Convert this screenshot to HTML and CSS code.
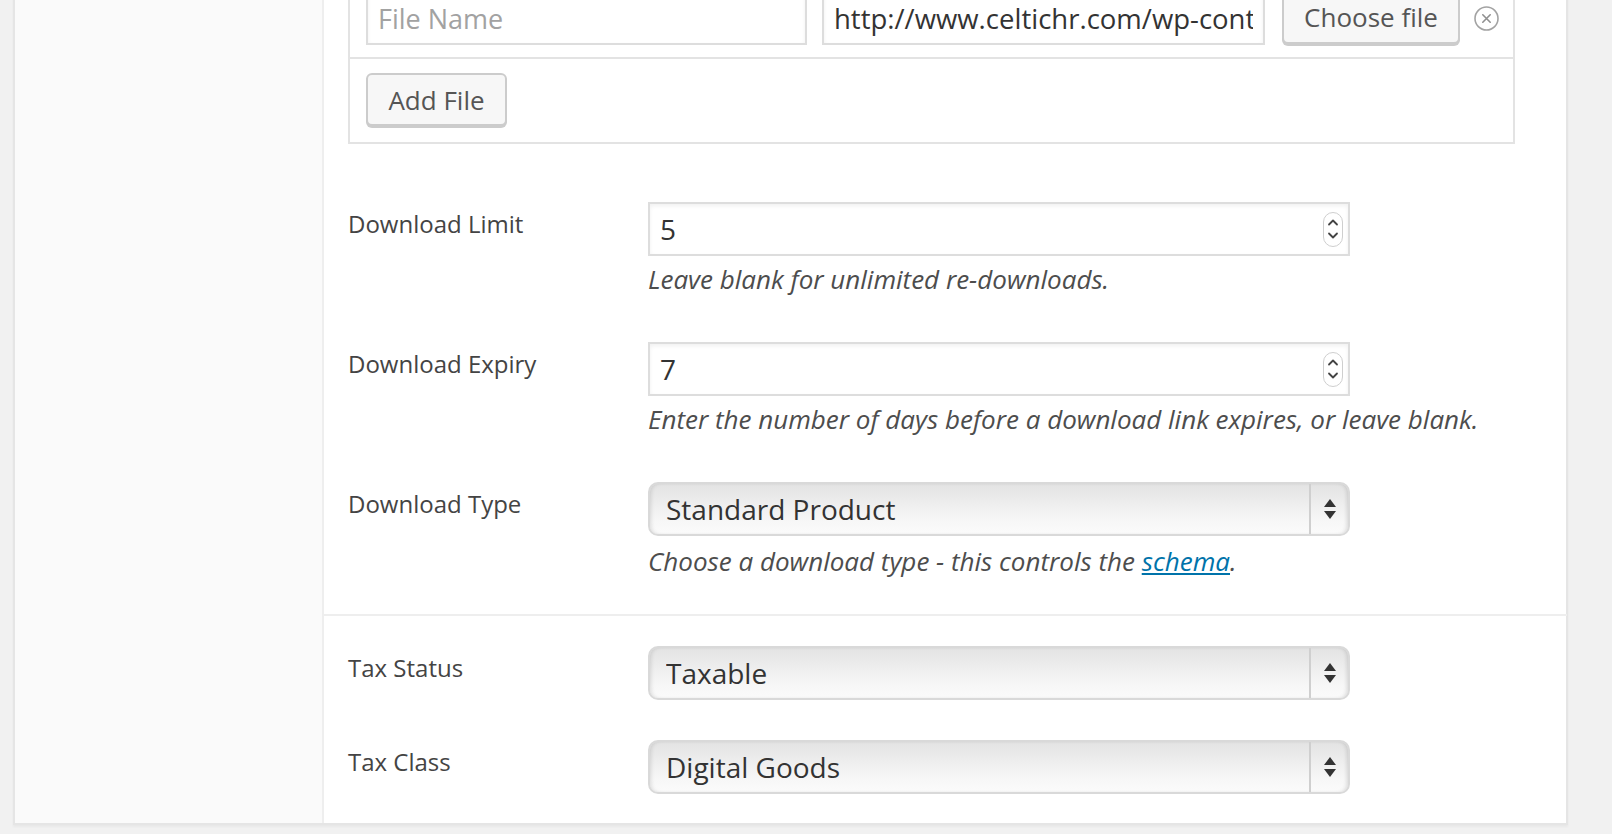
FILE: index.html
```html
<!DOCTYPE html>
<html lang="en">
<head>
<meta charset="utf-8">
<title>Download Settings</title>
<link rel="stylesheet" href="styles.css">
</head>
<body>
<div class="metabox">
  <div class="tabs"></div>
  <div class="panel">
    <div class="files">
      <div class="file-table">
        <div class="file-row">
          <input class="text-input name-input" type="text" placeholder="File Name">
          <input class="text-input url-input" type="text" value="http://www.celtichr.com/wp-content/uploads/edd/2015/05/download.zip">
          <button class="button choose-btn" type="button">Choose file</button>
          <span class="remove-icon">
            <svg width="25" height="25" viewBox="0 0 25 25"><circle cx="12.5" cy="12.5" r="11.5" fill="none" stroke="#a3a3a3" stroke-width="1.6"/><path d="M8.8 8.8 L16.2 16.2 M16.2 8.8 L8.8 16.2" stroke="#8f8f8f" stroke-width="1.6" stroke-linecap="round"/></svg>
          </span>
        </div>
        <div class="file-row add-row">
          <button class="button add-btn" type="button">Add File</button>
        </div>
      </div>
    </div>

    <div class="section download-section">
      <div class="field">
        <label class="field-label">Download Limit</label>
        <div class="field-body">
          <div class="num-field">
            <input class="num-input" type="text" value="5">
            <span class="spinner"><svg width="12" height="26" viewBox="0 0 12 26"><path d="M2 8.5 L6 4.5 L10 8.5 M2 17.5 L6 21.5 L10 17.5" fill="none" stroke="#444" stroke-width="1.8" stroke-linecap="round" stroke-linejoin="round"/></svg></span>
          </div>
          <p class="description">Leave blank for unlimited re-downloads.</p>
        </div>
      </div>
      <div class="field">
        <label class="field-label">Download Expiry</label>
        <div class="field-body">
          <div class="num-field">
            <input class="num-input" type="text" value="7">
            <span class="spinner"><svg width="12" height="26" viewBox="0 0 12 26"><path d="M2 8.5 L6 4.5 L10 8.5 M2 17.5 L6 21.5 L10 17.5" fill="none" stroke="#444" stroke-width="1.8" stroke-linecap="round" stroke-linejoin="round"/></svg></span>
          </div>
          <p class="description shift-sm">Enter the number of days before a download link expires, or leave blank.</p>
        </div>
      </div>
      <div class="field">
        <label class="field-label">Download Type</label>
        <div class="field-body">
          <div class="select-box">
            <select class="select"><option>Standard Product</option></select>
            <span class="select-arrows"><svg width="14" height="24" viewBox="0 0 14 24"><path d="M7 2 L13 10 L1 10 Z M1 14 L13 14 L7 22 Z" fill="#333"/></svg></span>
          </div>
          <p class="description shift-lg">Choose a download type - this controls the <a href="#" class="link">schema</a>.</p>
        </div>
      </div>
    </div>

    <div class="section tax-section">
      <div class="field">
        <label class="field-label">Tax Status</label>
        <div class="field-body">
          <div class="select-box">
            <select class="select"><option>Taxable</option></select>
            <span class="select-arrows"><svg width="14" height="24" viewBox="0 0 14 24"><path d="M7 2 L13 10 L1 10 Z M1 14 L13 14 L7 22 Z" fill="#333"/></svg></span>
          </div>
        </div>
      </div>
      <div class="field">
        <label class="field-label">Tax Class</label>
        <div class="field-body">
          <div class="select-box">
            <select class="select"><option>Digital Goods</option></select>
            <span class="select-arrows"><svg width="14" height="24" viewBox="0 0 14 24"><path d="M7 2 L13 10 L1 10 Z M1 14 L13 14 L7 22 Z" fill="#333"/></svg></span>
          </div>
        </div>
      </div>
    </div>
  </div>
</div>
</body>
</html>
```

FILE: styles.css
```css
html, body {
  margin: 0;
  padding: 0;
}
body {
  background: #f1f1f1;
  font-family: "Open Sans", "Liberation Sans", sans-serif;
  color: #444;
  padding: 0 44px 0 13px;
  height: 834px;
  overflow: hidden;
}
.metabox {
  margin-top: -40px;
  display: flex;
  background: #fff;
  border: 2px solid #e5e5e5;
  border-top: none;
  box-shadow: 0 2px 2px rgba(0,0,0,0.04);
}
.tabs {
  width: 307px;
  background: #fafafa;
  border-right: 2px solid #eeeeee;
  flex: none;
}
.panel {
  flex: 1;
  display: flex;
  flex-direction: column;
}
.files {
  padding: 15px 52px 0 24px;
}
.file-table {
  border: 2px solid #e3e3e3;
}
.file-row {
  display: flex;
  align-items: center;
  padding: 14px 14px 12px 16px;
}
.add-row {
  border-top: 2px solid #e3e3e3;
  padding: 14px 16px 16px 16px;
}
.text-input {
  height: 54px;
  box-sizing: border-box;
  border: 2px solid #dddddd;
  box-shadow: inset 0 2px 4px rgba(0,0,0,0.06);
  background: #fff;
  font-family: "Open Sans", sans-serif;
  font-size: 27px;
  color: #333;
  padding: 0 10px;
  margin: 0;
  outline: none;
}
.text-input::placeholder {
  color: #a2a2a2;
}
.name-input {
  width: 441px;
  margin-right: 15px;
}
.url-input {
  width: 443px;
  margin-right: 17px;
  font-size: 27.5px;
}
.button {
  font-family: "Open Sans", sans-serif;
  font-size: 26px;
  color: #555;
  background: #f7f7f7;
  border: 2px solid #cccccc;
  border-radius: 6px;
  box-shadow: 0 2px 0 #cccccc;
  height: 53px;
  padding: 0 19px;
  margin: 0;
  cursor: pointer;
}
.choose-btn {
  width: 178px;
  margin-top: -2px;
}
.add-btn {
  width: 141px;
}
.remove-icon {
  display: flex;
  margin-left: 14px;
}
.section {
  padding-left: 24px;
  display: flex;
  flex-direction: column;
}
.download-section {
  padding-top: 58px;
  padding-bottom: 33px;
  gap: 43px;
  border-bottom: 2px solid #eeeeee;
}
.tax-section {
  padding-top: 30px;
  padding-bottom: 29px;
  gap: 40px;
}
.field {
  display: grid;
  grid-template-columns: 300px 1fr;
}
.field-label {
  font-size: 24px;
  line-height: 39px;
  padding-top: 2px;
  color: #444;
}
.num-field {
  width: 702px;
  height: 54px;
  box-sizing: border-box;
  border: 2px solid #dddddd;
  box-shadow: inset 0 2px 4px rgba(0,0,0,0.06);
  display: flex;
  align-items: center;
  margin-bottom: 4px;
}
.num-input {
  flex: 1;
  min-width: 0;
  border: none;
  background: transparent;
  font-family: "Open Sans", sans-serif;
  font-size: 28px;
  color: #333;
  padding: 0 10px;
  height: 100%;
  outline: none;
}
.spinner {
  width: 18px;
  height: 33px;
  border: 1.5px solid #cfcfcf;
  border-radius: 10px;
  display: flex;
  align-items: center;
  justify-content: center;
  margin-right: 5px;
  background: #fff;
}
.description {
  margin: 0;
  font-size: 26px;
  line-height: 39px;
  font-style: italic;
  color: #4d4d4d;
  white-space: nowrap;
}
.shift-sm {
  margin-top: 2px;
}
.shift-lg {
  margin-top: 6px;
}
.link {
  color: #0073aa;
  text-decoration: underline;
}
.select-box {
  width: 702px;
  height: 54px;
  box-sizing: border-box;
  border: 2px solid #d9d9d9;
  border-radius: 10px;
  background: linear-gradient(#e3e3e3, #f6f6f6 70%, #fbfbfb);
  box-shadow: inset 3px 0 4px -2px rgba(0,0,0,0.12), inset -3px 0 4px -2px rgba(0,0,0,0.14);
  display: flex;
  align-items: stretch;
}
.select {
  flex: 1;
  -webkit-appearance: none;
  appearance: none;
  border: none;
  background: transparent;
  font-family: "Open Sans", sans-serif;
  font-size: 28px;
  color: #333;
  padding: 0 16px;
  outline: none;
  margin: 0;
}
.select-arrows {
  width: 37px;
  border-left: 2px solid #cfcfcf;
  display: flex;
  align-items: center;
  justify-content: center;
}
```
